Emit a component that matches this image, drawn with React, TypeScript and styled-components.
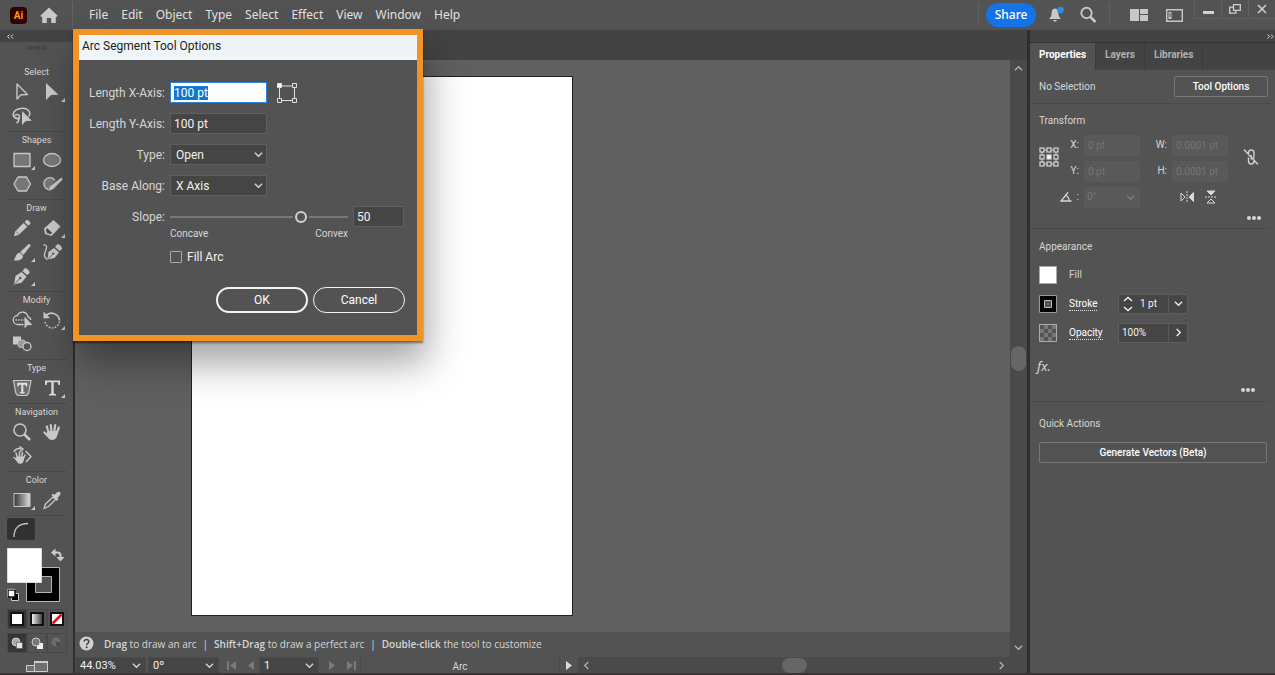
import React, { useEffect, useRef } from 'react';
import styled, { createGlobalStyle, css } from 'styled-components';

const c = {
  panel: '#535353',
  dark: '#434343',
  edge: '#2e2e2e',
  line: '#4a4a4a',
  field: '#454545',
  canvas: '#606060',
  text: '#d6d6d6',
  bright: '#f2f2f2',
  icon: '#c8c8c8',
  orange: '#ee9428',
};
const uiFont = "Roboto, 'Noto Sans', sans-serif";
const menuFont = "'Noto Sans', 'Open Sans', sans-serif";

const Global = createGlobalStyle`
  *, *::before, *::after { box-sizing: border-box; }
  body { margin: 0; background: ${c.panel}; color: ${c.text}; font: 10px/14px ${uiFont}; }
  button, input, select { font: inherit; color: inherit; margin: 0; }
  button { cursor: pointer; }
  svg { display: block; flex: none; }
`;

/* ---------- shell ---------- */
const Shell = styled.div`
  display: flex;
  flex-direction: column;
  min-height: 100vh;
  border-bottom: 3px solid #3a3436;
  position: relative;
`;
const Work = styled.div`
  flex: 1;
  display: grid;
  grid-template-columns: 75px minmax(0, 1fr) 248px;
`;

/* ---------- application bar ---------- */
const AppBar = styled.header`
  display: flex;
  align-items: center;
  height: 30px;
  background: ${c.panel};
  font: 12px/16px ${menuFont};
`;
const Brand = styled.div`
  display: flex;
  align-items: center;
  gap: 13px;
  width: 73px;
  height: 26px;
  padding-left: 10px;
  border-right: 1px solid #626262;
`;
const AiMark = styled.span`
  width: 17px;
  height: 17px;
  border-radius: 4px;
  background: #330000;
  color: #ff9a00;
  font: bold 10px/17px ${uiFont};
  text-align: center;
`;
const Menu = styled.nav`
  display: flex;
  flex: 1;
  gap: 1px;
  padding-left: 10px;
`;
const MenuItem = styled.button`
  border: 0;
  padding: 0 6px;
  background: none;
  color: #e2e2e2;
`;
const BarIcon = styled.button<{ $w: number }>`
  display: flex;
  justify-content: center;
  width: ${(p) => p.$w}px;
  padding: 0;
  border: 0;
  background: none;
  color: ${c.icon};
`;
const BarRule = styled.span<{ $space?: number }>`
  width: 1px;
  height: 24px;
  margin: 0 ${(p) => p.$space ?? 8}px;
  background: #616161;
`;
const Share = styled.button`
  width: 50px;
  height: 24px;
  margin-right: 4px;
  padding: 0;
  border: 0;
  border-radius: 12px;
  background: #1473e6;
  color: #fff;
  font-weight: 500;
`;
const WindowButtons = styled.div`
  display: flex;
  align-self: flex-start;
  margin-left: 9px;
`;
const WindowButton = styled.button`
  display: grid;
  place-items: center;
  width: 27px;
  height: 19px;
  padding: 0;
  border: solid #5f5f5f;
  border-width: 0 0 1px 1px;
  background: none;
  color: #d0d0d0;
`;

/* ---------- tool bar ---------- */
const Tools = styled.aside`
  display: flex;
  flex-direction: column;
  align-items: center;
  background: ${c.panel};
  border-right: 2px solid ${c.edge};
`;
const Strip = styled.div<{ $end?: boolean }>`
  display: flex;
  align-self: stretch;
  align-items: center;
  justify-content: ${(p) => (p.$end ? 'flex-end' : 'flex-start')};
  height: 12px;
  padding: 0 ${(p) => (p.$end ? 1 : 7)}px;
  background: ${c.dark};
`;
const Grip = styled.div`
  width: 20px;
  height: 4px;
  margin: 4px 0 13px;
  background: repeating-linear-gradient(90deg, #3f3f3f 0 1px, transparent 1px 2px);
`;
const Group = styled.section<{ $first?: boolean }>`
  width: 60px;
  padding-bottom: 2px;
  border-top: 1px solid ${(p) => (p.$first ? 'transparent' : '#494949')};
`;
const GroupName = styled.h2`
  margin: 0;
  font: 9px/16px ${uiFont};
  text-align: center;
`;
const ToolGrid = styled.div`
  display: grid;
  grid-template-columns: 30px 30px;
  grid-auto-rows: 24px;
  padding-bottom: 1px;
`;
const Tool = styled.button<{ $more?: boolean }>`
  position: relative;
  display: grid;
  place-items: center;
  padding: 0;
  border: 0;
  background: none;
  color: ${c.icon};
  ${(p) =>
    p.$more &&
    css`
      &::after {
        content: '';
        position: absolute;
        right: 2px;
        bottom: 2px;
        border: 2px solid transparent;
        border-right-color: ${c.icon};
        border-bottom-color: ${c.icon};
      }
    `}
`;
const ActiveTool = styled.button`
  display: grid;
  place-items: center;
  width: 28px;
  height: 22px;
  margin: 2px 0;
  padding: 0;
  border: 1px solid #333;
  border-radius: 2px;
  background: #313131;
  color: ${c.icon};
`;
const TriRow = styled.div`
  display: grid;
  grid-template-columns: repeat(3, 20px);
  height: 20px;
  margin-top: 4px;
`;
const Cell = styled.button<{ $on?: boolean }>`
  display: grid;
  place-items: center;
  padding: 0;
  border: 1px solid #494949;
  background: ${(p) => (p.$on ? '#363636' : 'none')};
`;
const ScreenMode = styled.button`
  margin-top: 7px;
  padding: 0;
  border: 0;
  background: none;
`;

/* ---------- document ---------- */
const Doc = styled.main`
  display: flex;
  flex-direction: column;
  min-width: 0;
`;
const TabStrip = styled.div`
  height: 30px;
  background: ${c.dark};
`;
const View = styled.div`
  flex: 1;
  display: grid;
  grid-template-columns: minmax(0, 1fr) 17px;
`;
const Stage = styled.div`
  display: flex;
  flex-direction: column;
`;
const Pasteboard = styled.div`
  flex: 1;
  padding: 16px 0 16px 116px;
  background: ${c.canvas};
`;
const Artboard = styled.div`
  width: 382px;
  height: 540px;
  border: 1px solid #222;
  background: #fff;
`;
const HelpBar = styled.div`
  display: flex;
  align-items: center;
  gap: 7px;
  height: 25px;
  padding: 0 0 2px 4px;
  background: ${c.panel};
  font-family: 'Open Sans', ${menuFont};
  white-space: pre;

  b { font-weight: 600; }
  i { font-style: normal; margin: 0 6px; }
`;
const HelpText = styled.p`
  margin: 0 0 0 3px;
`;
const StatusBar = styled.div`
  display: flex;
  height: 16px;
  background: ${c.panel};
`;
const StatusSelect = styled.label<{ $w: number }>`
  position: relative;
  display: flex;
  align-items: center;
  width: ${(p) => p.$w}px;
  margin-right: 2px;
  background: ${c.field};
  border: 1px solid #4b4b4b;
  border-bottom: 0;

  select {
    appearance: none;
    width: 100%;
    height: 15px;
    padding: 0 4px;
    border: 0;
    background: none;
    color: ${c.bright};
    font-size: 11px;
    line-height: 15px;
  }
  svg {
    position: absolute;
    right: 4px;
    pointer-events: none;
  }
`;
const StatusIcon = styled.button<{ $w: number; $dim?: boolean }>`
  display: grid;
  place-items: center;
  width: ${(p) => p.$w}px;
  padding: 0;
  border: 0;
  background: none;
  color: ${(p) => (p.$dim ? '#7a7a7a' : '#dcdcdc')};
`;
const StatusName = styled.span`
  width: 200px;
  margin-left: 1px;
  border: solid #494949;
  border-width: 0 1px;
  font-size: 10px;
  line-height: 20px;
  text-align: center;
`;
const HScroll = styled.div`
  flex: 1;
  display: flex;
  align-items: center;
  justify-content: space-between;
  padding: 0 4px;
  background: ${c.line};
  color: #b0b0b0;
`;
const VScroll = styled.div`
  display: flex;
  flex-direction: column;
  align-items: center;
  justify-content: space-between;
  padding: 4px 0 21px;
  background: ${c.line};
  color: #b0b0b0;
`;
const Thumb = styled.span<{ $v?: boolean }>`
  width: ${(p) => (p.$v ? 15 : 25)}px;
  height: ${(p) => (p.$v ? 25 : 15)}px;
  border-radius: 8px;
  background: #666;
`;

/* ---------- properties ---------- */
const Side = styled.aside`
  display: flex;
  flex-direction: column;
  border-left: 3px solid ${c.edge};
  background: ${c.panel};
`;
const Tabs = styled.div`
  display: flex;
  height: 28px;
  border-top: 1px solid #333;
  background: ${c.dark};
`;
const Tab = styled.button<{ $on?: boolean }>`
  padding: 0 9px 3px;
  border: 0;
  border-right: 1px solid #3b3b3b;
  background: ${(p) => (p.$on ? c.panel : 'none')};
  color: ${(p) => (p.$on ? '#fff' : '#b0b0b0')};
  font: bold 10px/24px ${uiFont};
`;
const Section = styled.section<{ $rule?: boolean }>`
  margin-right: 6px;
  padding: 0 2px 0 9px;
  border-bottom: 1px solid ${(p) => (p.$rule ? '#494949' : 'transparent')};
`;
const Heading = styled.h3`
  margin: 0;
  color: ${c.text};
  font: 10px/14px ${uiFont};
`;
const Between = styled.div`
  display: flex;
  align-items: center;
  justify-content: space-between;
`;
const Outline = styled.button<{ $w?: number }>`
  width: ${(p) => (p.$w ? p.$w + 'px' : '100%')};
  height: 21px;
  padding: 0;
  border: 1px solid #777;
  border-radius: 2px;
  background: none;
  color: #fff;
  font-size: 10px;
  font-weight: 500;
`;
const TransformGrid = styled.div`
  display: grid;
  grid-template-columns: 26px 75px 13px 75px 1fr;
  align-items: center;
`;
const Pair = styled.label`
  display: flex;
  align-items: center;
  justify-content: flex-end;
  gap: 5px;
  height: 26px;
`;
const DimInput = styled.input`
  width: 56px;
  height: 21px;
  padding: 0 4px;
  border: 0;
  background: #595959;
  color: #757575;
`;
const DimSelect = styled.span`
  position: relative;
  display: flex;
  align-items: center;
  color: #7c7c7c;

  select {
    appearance: none;
    width: 56px;
    height: 21px;
    padding: 0 3px;
    border: 0;
    background: #595959;
    color: #757575;
    opacity: 1;
  }
  svg {
    position: absolute;
    right: 5px;
    pointer-events: none;
  }
`;
const FlipGroup = styled.div`
  display: flex;
  align-items: center;
  justify-content: flex-end;
  gap: 10px;
  padding-right: 10px;
`;
const More = styled.button<{ $inset: number }>`
  display: block;
  margin: 0 ${(p) => p.$inset}px 0 auto;
  padding: 0;
  border: 0;
  background: none;
  color: ${c.text};
`;
const LookRow = styled.div`
  display: grid;
  grid-template-columns: 30px 49px auto;
  align-items: center;
  justify-content: start;
  height: 29px;
`;
const LookLink = styled.a`
  justify-self: start;
  border-bottom: 1px dotted #ddd;
  color: #fff;
  line-height: 13px;
  text-decoration: none;
`;
const Combo = styled.div`
  display: flex;
  height: 20px;
  border: 1px solid #5e5e5e;
  background: ${c.field};

  button {
    display: grid;
    place-items: center;
    width: 18px;
    padding: 0;
    border: 0;
    background: none;
    color: #eee;
  }
  input {
    height: 18px;
    padding: 0 3px;
    border: 0;
    border-right: 1px solid #5a5a5a;
    background: none;
    color: ${c.bright};
  }
`;
const ComboInput = styled.input<{ $w: number }>`
  width: ${(p) => p.$w}px;
`;
const Fx = styled.button`
  display: block;
  margin: 10px 0 0 -2px;
  padding: 0;
  border: 0;
  background: none;
  font: italic 13px/18px ${menuFont};
`;

/* ---------- dialog ---------- */
const Dialog = styled.form`
  position: absolute;
  top: 29px;
  left: 73px;
  width: 350px;
  border: 6px solid ${c.orange};
  background: ${c.panel};
  box-shadow: 0 2px 2px rgba(0, 0, 0, 0.45), 4px 22px 36px rgba(0, 0, 0, 0.36);
  font: 12px/16px ${uiFont};
`;
const DialogTitle = styled.h1`
  margin: 0;
  padding: 2px 3px 0;
  height: 25px;
  background: #eff4f9;
  color: #1c1c1c;
  font: 12px/18px ${uiFont};
`;
const Fields = styled.div`
  display: flex;
  flex-direction: column;
  gap: 10px;
  padding-top: 22px;
`;
const FieldRow = styled.div`
  display: grid;
  grid-template-columns: 86px auto auto;
  column-gap: 5px;
  align-items: center;
  justify-content: start;
  height: 21px;

  label { text-align: right; }
`;
const box = css`
  height: 21px;
  border: 1px solid #5f5f5f;
  background: ${c.field};
  color: ${c.bright};
`;
const TextField = styled.input<{ $w: number }>`
  ${box}
  width: ${(p) => p.$w}px;
  padding: 0 3px;

  &:focus {
    outline: 0;
    border-color: #2f80d8;
    background: #fff;
    color: #222;
  }
  &::selection {
    background: #0f78d4;
    color: #fff;
  }
`;
const DropField = styled.span`
  position: relative;
  display: flex;
  align-items: center;

  select {
    ${box}
    appearance: none;
    width: 97px;
    padding: 0 5px;
  }
  svg {
    position: absolute;
    right: 4px;
    pointer-events: none;
  }
`;
const Corner = styled.span`
  margin-left: 5px;
`;
const Slider = styled.input`
  appearance: none;
  width: 178px;
  height: 16px;
  background: none;

  &::-webkit-slider-runnable-track {
    height: 2px;
    background: #777;
  }
  &::-webkit-slider-thumb {
    appearance: none;
    width: 12px;
    height: 12px;
    margin-top: -5px;
    border: 2px solid #d2d2d2;
    border-radius: 50%;
    background: ${c.panel};
    box-shadow: 0 0 0 2px ${c.panel};
  }
`;
const Hints = styled.div`
  display: flex;
  justify-content: space-between;
  width: 178px;
  margin-left: 91px;
  font-size: 10px;
  line-height: 14px;
`;
const Check = styled.label`
  display: flex;
  align-items: center;
  gap: 5px;
  margin: 8px 0 0 91px;
  color: ${c.bright};

  input {
    appearance: none;
    width: 12px;
    height: 12px;
    border: 1px solid #a8a8a8;
    border-radius: 1px;
  }
`;
const Actions = styled.div`
  display: flex;
  justify-content: flex-end;
  gap: 5px;
  padding: 22px 12px;
`;
const Pill = styled.button<{ $primary?: boolean }>`
  width: 92px;
  height: 26px;
  border: ${(p) => (p.$primary ? 2 : 1)}px solid #f4f4f4;
  border-radius: 13px;
  background: none;
  color: #fff;
`;

/* ---------- icons ---------- */
type Kids = { children: React.ReactNode };
const Ico = ({ children }: Kids) => (
  <svg width="22" height="22" viewBox="0 0 22 22" fill="none" stroke="currentColor" strokeWidth="1.3" strokeLinejoin="round">
    {children}
  </svg>
);
const Chevron = ({ dir = 'down', size = 9 }: { dir?: 'down' | 'up' | 'left' | 'right'; size?: number }) => {
  const d = { down: 'M1 3l4 4 4-4', up: 'M1 7l4-4 4 4', left: 'M7 1L3 5l4 4', right: 'M3 1l4 4-4 4' }[dir];
  return (
    <svg width={size} height={size} viewBox="0 0 10 10" fill="none" stroke="currentColor" strokeWidth="1.5">
      <path d={d} />
    </svg>
  );
};
const Double = ({ right }: { right?: boolean }) => (
  <svg width="7" height="5" viewBox="0 0 7 5" fill="none" stroke="#ddd" strokeWidth="1">
    <path d={right ? 'M.5 .5l2 2-2 2M4 .5l2 2-2 2' : 'M2.500 .5l-2 2 2 2M6 .5l-2 2 2 2'} />
  </svg>
);
const Dots = () => (
  <svg width="16" height="6" viewBox="0 0 16 6" fill="currentColor">
    <circle cx="3" cy="3" r="2" /><circle cx="8" cy="3" r="2" /><circle cx="13" cy="3" r="2" />
  </svg>
);

const icons: Record<string, React.ReactNode> = {
  Selection: <Ico><path d="M6 3v15l4-4.200 6.500-.3z" strokeWidth="1.400" /></Ico>,
  'Direct Selection': <Ico><path d="M5 2v17l5-5 7.500-.3z" fill="currentColor" stroke="none" /></Ico>,
  Lasso: (
    <Ico>
      <path d="M9 13.500c-6 1-8-3-6-6.500 2.500-4 11-5 14.500-1.500 1.800 2 1.300 4.500 0 6" strokeWidth="1.500" />
      <path d="M4 11c1-2.500 5-1.500 4.500 1-.5 2-4 1.800-4 0M7.500 13.500c.5 2 0 3.500-2 4.500" strokeWidth="1.500" />
      <path d="M11 6v14l3.800-4 6-.3z" fill="currentColor" stroke="none" />
    </Ico>
  ),
  Rectangle: <Ico><path d="M3 4.500h16v13H3z" fill="#777" /></Ico>,
  Ellipse: <Ico><ellipse cx="11" cy="11" rx="8.500" ry="6.500" fill="#777" /></Ico>,
  Polygon: <Ico><path d="M7 4h8.500l4 7-4 7H7l-4-7z" fill="#777" /></Ico>,
  Shaper: (
    <Ico>
      <path d="M14 7.500A6 6 0 1 0 8 16.500z" fill="#777" stroke="none" />
      <path d="M14 7.500A6 6 0 1 0 7.500 16.500" />
      <path d="M20.500 4.500l1.200 2-9.500 9.500-4.700 2 1.500-4.500z" fill="currentColor" stroke="none" />
    </Ico>
  ),
  Pencil: (
    <Ico>
      <path d="M12.500 6l3.800 3.800L7.500 18 3 19.300 4.200 14.500zM13.500 5l2.300-2.300c1.500.3 3.200 2 3.800 3.800L17.300 8.800z" fill="currentColor" stroke="none" />
      <path d="M5.300 15l2.200 2" stroke="#535353" strokeWidth=".8" />
    </Ico>
  ),
  Eraser: (
    <Ico>
      <path d="M3 11.500L12.500 3l7 6.500-9 9.500-6.500-2z" fill="currentColor" stroke="none" />
      <path d="M5 12.500l.8 3.500 4 1.200 1.200-1.400-4.700-4.500z" fill="#484848" stroke="none" />
    </Ico>
  ),
  Paintbrush: (
    <Ico>
      <path d="M18 3l1.500 1.500-7.200 9.200-2.800-2.600zM8.800 12l2.800 2.700c.2 4-4.600 5-8.600 4.300 2.200-1.500 1.300-6.500 5.800-7z" fill="currentColor" strokeWidth=".6" />
    </Ico>
  ),
  Curvature: (
    <Ico>
      <path d="M2.500 4c3.500-.5 3.500 2.500 2.200 5.500S2 16 6.500 18.500" />
      <path d="M6.500 18.500l1-7.500 5.500-4 5 4.500-4.500 5.500zM14 6l2.500-3c2.500.5 4.500 2.500 4.700 5L18.500 10z" fill="currentColor" stroke="none" />
      <path d="M7.500 17.500l4-4" stroke="#535353" strokeWidth=".9" /><circle cx="12.200" cy="12.700" r="1.100" fill="#535353" stroke="none" />
    </Ico>
  ),
  Pen: (
    <Ico>
      <path d="M3 19.500l1.500-8.500 6-4 5 4.500-4.700 6zM11.500 6L14 3c2.500.5 4.500 2.500 4.700 5L16 10z" fill="currentColor" stroke="none" />
      <path d="M4 18.500l4.500-4.500" stroke="#535353" strokeWidth=".9" /><circle cx="9.200" cy="13" r="1.200" fill="#535353" stroke="none" />
    </Ico>
  ),
  'Shape Builder': (
    <Ico>
      <path d="M12.500 15.500H7a4.500 4.500 0 0 1-.5-9 5.500 5.500 0 0 1 10.500 1.500c1.500.3 2.500 1.500 3 3" />
      <path d="M4.500 11h9" strokeDasharray="1.500 1.200" />
      <path d="M13.500 7.500v12l3-3.200 5-.3z" fill="currentColor" stroke="none" />
    </Ico>
  ),
  Rotate: (
    <Ico>
      <path d="M5 6.500a8 8 0 0 1 13.500 5" strokeWidth="1.800" />
      <path d="M2.500 2.500v7l6.500-.5z" fill="currentColor" stroke="none" />
      <path d="M18.500 12.500a7.300 7.300 0 0 1-14.500 0" strokeWidth="1.600" strokeDasharray="1.600 1.500" />
    </Ico>
  ),
  Blend: (
    <Ico>
      <path d="M2 3.500h8v8H2z" fill="currentColor" stroke="none" />
      <rect x="7" y="7" width="7.500" height="7.500" rx="2.500" fill="#9a9a9a" stroke="#c4c4c4" strokeWidth=".8" />
      <circle cx="16" cy="13.500" r="4" fill="#535353" />
    </Ico>
  ),
  'Touch Type': (
    <Ico>
      <path d="M2.500 3.500h17.500l-2.300 12.500-2.200 2.500H7L4.800 16z" fill="#6c6c6c" strokeWidth="1.200" />
      <path d="M6.300 5.800h10v3.700H15l-.5-1.800h-2.200v7.300l1.500.5v1H8.800v-1l1.500-.5V7.700H8.100l-.5 1.800H6.300z" fill="#e2e2e2" stroke="none" />
    </Ico>
  ),
  Type: <Ico><path d="M4 3.500h15V8h-1.500l-.8-2.700H12.700v11.200l2.300.7v1.300H8v-1.300l2.300-.7V5.300H6.300L5.500 8H4z" fill="#d8d8d8" stroke="none" /></Ico>,
  Zoom: <Ico><circle cx="9" cy="9" r="6" strokeWidth="1.500" /><path d="M13.500 13.500l5.500 5.500" strokeWidth="2.500" /></Ico>,
  Hand: (
    <Ico>
      <path d="M7.800 12L5.800 5.500M10.500 11L9.800 4M13.200 11l1-7M15.800 12l2-5.500M6.500 14.500l-3-3" strokeWidth="2.200" strokeLinecap="round" />
      <path d="M6.800 10h10c.2 5.500-2 9-5.300 9S7 17 5 14z" fill="currentColor" stroke="none" />
    </Ico>
  ),
  'Rotate View': (
    <Ico>
      <path d="M6.300 12L5 8M8.500 12V7M10.700 12l.8-4.500M12.500 13l1.700-3M5.500 14.500l-2.500-2" strokeWidth="1.500" strokeLinecap="round" />
      <path d="M5.700 11.500h7.600c.2 4.500-1.500 7.300-4 7.300S6 17 4.500 14.500z" fill="currentColor" stroke="none" />
      <path d="M3 7C4 4 7 3 10 4M8.500 1.500l3.500 2.700-3 2.600M14.500 6l5.500 5.500-5 5.500" strokeWidth="1.500" />
    </Ico>
  ),
  Gradient: (
    <Ico>
      <defs><linearGradient id="toolGrad"><stop stopColor="#333" /><stop offset="1" stopColor="#ddd" /></linearGradient></defs>
      <path d="M3 4.500h16v13H3z" fill="url(#toolGrad)" strokeWidth="1" />
    </Ico>
  ),
  Eyedropper: (
    <Ico>
      <path d="M12 8l2.500 2.500-7 7L3 19.500l1.500-4.500z" />
      <path d="M10.500 6l1.500-1.300 1.500 1L16.500 3c2-1.200 4 1 2.500 3L16.500 9l.8 1.500-1.500 1.500z" fill="currentColor" stroke="none" />
    </Ico>
  ),
};

type ToolDef = [name: string, more?: boolean];
const groups: { name: string; tools: ToolDef[] }[] = [
  { name: 'Select', tools: [['Selection'], ['Direct Selection', true], ['Lasso']] },
  { name: 'Shapes', tools: [['Rectangle', true], ['Ellipse'], ['Polygon'], ['Shaper']] },
  { name: 'Draw', tools: [['Pencil'], ['Eraser', true], ['Paintbrush', true], ['Curvature'], ['Pen', true]] },
  { name: 'Modify', tools: [['Shape Builder'], ['Rotate', true], ['Blend']] },
  { name: 'Type', tools: [['Touch Type'], ['Type', true]] },
  { name: 'Navigation', tools: [['Zoom'], ['Hand'], ['Rotate View']] },
  { name: 'Color', tools: [['Gradient', true], ['Eyedropper']] },
];

const FillStroke = () => (
  <svg width="60" height="61" viewBox="0 0 60 61" fill="none" role="img" aria-label="Fill and stroke">
    <path d="M19.500 23.500h33v34h-33z" fill="#000" stroke="#b5b5b5" />
    <path d="M28.500 32.500h16v16h-16z" fill="#535353" stroke="#b5b5b5" />
    <path d="M.5 4.500h34v34H.5z" fill="#fff" stroke="#ddd" />
    <path d="M47 8.500h3.500c2 0 3 1 3 3v3" stroke="#ccc" strokeWidth="2" />
    <path d="M44 8.500l4.500-4v8zM49.500 13h8l-4 4.500z" fill="#ccc" />
    <path d="M4.500 49.500h7v7h-7z" fill="#000" stroke="#ccc" />
    <path d="M1 46h7v7H1z" fill="#fff" stroke="#111" strokeWidth="1.500" />
    <path d="M.3 53.500v-8.200h8.200" stroke="#ccc" strokeWidth=".8" />
  </svg>
);

const PaintCell = ({ kind }: { kind: 'solid' | 'gradient' | 'none' }) => (
  <svg width="14" height="14" viewBox="0 0 14 14">
    <defs><linearGradient id="paintGrad"><stop stopColor="#fff" /><stop offset="1" stopColor="#333" /></linearGradient></defs>
    <path d="M1 1h12v12H1z" fill={kind === 'gradient' ? 'url(#paintGrad)' : '#fff'} stroke="#111" strokeWidth="2" />
    {kind === 'none' && <path d="M2.500 11.500l9-9" stroke="#e3101c" strokeWidth="2.500" />}
  </svg>
);
const DrawMode = ({ kind }: { kind: 0 | 1 | 2 }) => (
  <svg width="14" height="14" viewBox="0 0 14 14" opacity={kind === 2 ? 0.25 : 1}>
    {kind === 1 && <path d="M7 7h6v6H7z" fill="#eee" />}
    <circle cx="6" cy="6" r="4" fill={kind === 1 ? '#777' : '#aaa'} stroke="#ccc" />
    {kind === 0 && <path d="M6.500 6.500h6v6h-6z" fill="#e4e4e4" stroke="#555" strokeWidth=".6" />}
    {kind === 2 && <path d="M6 6h4v4H6z" fill="#333" />}
  </svg>
);

const ToolPanel = () => (
  <Tools aria-label="Tools">
    <Strip><Double /></Strip>
    <Grip />
    {groups.map((g, i) => (
      <Group key={g.name} $first={i === 0}>
        <GroupName>{g.name}</GroupName>
        <ToolGrid>
          {g.tools.map(([name, more]) => (
            <Tool key={name} $more={more} aria-label={name}>{icons[name]}</Tool>
          ))}
        </ToolGrid>
      </Group>
    ))}
    <Group>
      <ActiveTool aria-label="Arc Segment">
        <Ico><path d="M4 18C4 9 9 4.500 18 4.500" /></Ico>
      </ActiveTool>
    </Group>
    <FillStroke />
    <TriRow>
      <Cell $on aria-label="Color"><PaintCell kind="solid" /></Cell>
      <Cell aria-label="Gradient fill"><PaintCell kind="gradient" /></Cell>
      <Cell aria-label="None"><PaintCell kind="none" /></Cell>
    </TriRow>
    <TriRow>
      <Cell $on aria-label="Draw Normal"><DrawMode kind={0} /></Cell>
      <Cell aria-label="Draw Behind"><DrawMode kind={1} /></Cell>
      <Cell aria-label="Draw Inside"><DrawMode kind={2} /></Cell>
    </TriRow>
    <ScreenMode aria-label="Screen mode">
      <svg width="22" height="12" viewBox="0 0 22 12" fill="#707070" stroke="#ccc">
        <path d="M.5 5.500h10v6H.5z" /><path d="M8.500 1.500h13v10h-13z" /><path d="M8 2h14" strokeWidth="2" />
      </svg>
    </ScreenMode>
  </Tools>
);

const TopBar = () => (
  <AppBar>
    <Brand>
      <AiMark>Ai</AiMark>
      <svg width="18" height="17" viewBox="0 0 18 17" fill="#c8c8c8">
        <path d="M9 .5l8.700 8.200-1.200 1.300-.7-.5V16h-4.600v-5H6.800v5H2.200V9.500l-.7.500L.3 8.700z" />
      </svg>
    </Brand>
    <Menu>
      {['File', 'Edit', 'Object', 'Type', 'Select', 'Effect', 'View', 'Window', 'Help'].map((m) => (
        <MenuItem key={m}>{m}</MenuItem>
      ))}
    </Menu>
    <BarRule $space={7} />
    <Share>Share</Share>
    <BarIcon $w={32} aria-label="Notifications">
      <svg width="18" height="18" viewBox="0 0 18 18">
        <path d="M8 2.500c3 .5 3.500 3 3.500 5.500 0 2 .8 3 2.500 5H2c1.700-2 2.500-3 2.500-5C4.500 5.500 5 3 8 2.500zM6.200 14h3.600c-.2 2.300-3.400 2.300-3.600 0z" fill="#c8c8c8" />
        <circle cx="13.500" cy="4" r="3.300" fill="#2e8cf0" />
      </svg>
    </BarIcon>
    <BarIcon $w={32} aria-label="Search">
      <svg width="18" height="18" viewBox="0 0 18 18" fill="none" stroke="currentColor">
        <circle cx="7.500" cy="7" r="5.200" strokeWidth="1.900" /><path d="M11.300 10.800L16.500 16" strokeWidth="2.600" />
      </svg>
    </BarIcon>
    <BarRule $space={5} />
    <BarIcon $w={48} aria-label="Arrange documents">
      <svg width="18" height="12" viewBox="0 0 18 12" fill="currentColor"><path d="M0 0h9v12H0zM10 0h8v5h-8zM10 6h8v6h-8z" /></svg>
    </BarIcon>
    <BarIcon $w={22} aria-label="Switch workspace">
      <svg width="17" height="13" viewBox="0 0 17 13" fill="none" stroke="currentColor"><path d="M.7 .7h15.600v11.600H.7z" strokeWidth="1.400" /><path d="M2.500 3h3v7h-3z" fill="currentColor" stroke="none" /><path d="M3 5h2M3 7h2" stroke="#535353" /></svg>
    </BarIcon>
    <WindowButtons>
      <WindowButton aria-label="Minimize"><svg width="11" height="14" viewBox="0 0 11 14"><path d="M0 9h11v3H0z" fill="currentColor" /></svg></WindowButton>
      <WindowButton aria-label="Restore"><svg width="12" height="10" viewBox="0 0 12 10" fill="none" stroke="currentColor" strokeWidth="1.300"><path d="M4.500 .7h6.800v5.600H4.500zM4.500 3.200H.7v6h6.300V6.500" /></svg></WindowButton>
      <WindowButton aria-label="Close"><svg width="10" height="10" viewBox="0 0 10 10" stroke="currentColor" strokeWidth="1.600"><path d="M1 1l8 8M9 1L1 9" /></svg></WindowButton>
    </WindowButtons>
  </AppBar>
);

const Document = () => (
  <Doc>
    <TabStrip />
    <View>
      <Stage>
        <Pasteboard><Artboard /></Pasteboard>
        <HelpBar>
          <svg width="15" height="15" viewBox="0 0 15 15">
            <circle cx="7.500" cy="7.500" r="7" fill="#d0d0d0" />
            <path d="M5.200 5.800c0-3.200 4.800-3 4.600 0-.1 1.500-2.200 1.600-2.200 3.400" fill="none" stroke="#444" strokeWidth="1.500" />
            <circle cx="7.600" cy="11.200" r="1" fill="#444" />
          </svg>
          <HelpText><b>Drag</b> to draw an arc<i>|</i><b>Shift+Drag</b> to draw a perfect arc<i>|</i><b>Double-click</b> the tool to customize</HelpText>
        </HelpBar>
        <StatusBar>
          <StatusSelect $w={71}><select aria-label="Zoom level" defaultValue="44.03%"><option>44.03%</option></select><Chevron /></StatusSelect>
          <StatusSelect $w={71}><select aria-label="Rotate view" defaultValue="0º"><option>0º</option></select><Chevron /></StatusSelect>
          <StatusIcon $w={22} $dim aria-label="First"><svg width="10" height="9" viewBox="0 0 10 9" fill="currentColor"><path d="M0 0h2v9H0zM9 0v9L3 4.500z" /></svg></StatusIcon>
          <StatusIcon $w={16} $dim aria-label="Previous"><svg width="6" height="9" viewBox="0 0 6 9" fill="currentColor"><path d="M6 0v9L0 4.500z" /></svg></StatusIcon>
          <StatusSelect $w={60}><select aria-label="Artboard" defaultValue="1"><option>1</option></select><Chevron /></StatusSelect>
          <StatusIcon $w={22} $dim aria-label="Next"><svg width="6" height="9" viewBox="0 0 6 9" fill="currentColor"><path d="M0 0v9l6-4.500z" /></svg></StatusIcon>
          <StatusIcon $w={16} $dim aria-label="Last"><svg width="10" height="9" viewBox="0 0 10 9" fill="currentColor"><path d="M8 0h2v9H8zM1 0v9l6-4.500z" /></svg></StatusIcon>
          <StatusName>Arc</StatusName>
          <StatusIcon $w={18} aria-label="Status options"><svg width="6" height="9" viewBox="0 0 6 9" fill="currentColor"><path d="M0 0v9l6-4.500z" /></svg></StatusIcon>
          <HScroll><Chevron dir="left" /><Thumb /><Chevron dir="right" /></HScroll>
        </StatusBar>
      </Stage>
      <VScroll><Chevron dir="up" /><Thumb $v /><Chevron /></VScroll>
    </View>
  </Doc>
);

const RefPoint = () => (
  <svg width="20" height="20" viewBox="0 0 20 20" fill="none" stroke="#d8d8d8" strokeWidth="1.200">
    {[0, 1, 2].map((r) => [0, 1, 2].map((k) => (
      <rect key={`${r}${k}`} x={k * 7 + 1} y={r * 7 + 1} width="4" height="4" fill={r === 1 && k === 1 ? '#fff' : 'none'} />
    )))}
    <path d="M5 3h3M12 3h3M5 17h3M12 17h3M3 5v3M3 12v3M17 5v3M17 12v3" strokeWidth="1" />
  </svg>
);

const SelectionSection = styled(Section)`padding-top: 6px; padding-bottom: 6px; margin-right: 5px;`;
const TransformSection = styled(Section)`padding-top: 10px; padding-bottom: 7px;`;
const TransformBody = styled.div`padding: 4px 0 5px;`;
const RefCell = styled.div`grid-row: span 3; align-self: start; padding-top: 15px;`;
const LinkCell = styled.div`grid-row: span 3; align-self: start; padding: 16px 0 0 15px;`;
const LookSection = styled(Section)`padding-top: 11px; padding-bottom: 8px;`;
const LookRows = styled.div`padding-top: 6px;`;
const LookMore = styled.div`padding-top: 12px;`;
const QuickSection = styled(Section)`padding-top: 15px;`;
const QuickBody = styled.div`padding-top: 11px;`;

const Properties = () => (
  <Side>
    <Strip $end><Double right /></Strip>
    <Tabs>
      <Tab $on>Properties</Tab>
      <Tab>Layers</Tab>
      <Tab>Libraries</Tab>
    </Tabs>
    <SelectionSection $rule>
      <Between><span>No Selection</span><Outline $w={94}>Tool Options</Outline></Between>
    </SelectionSection>
    <TransformSection $rule>
      <Heading>Transform</Heading>
      <TransformBody>
        <TransformGrid>
          <RefCell><RefPoint /></RefCell>
          <Pair>X:<DimInput defaultValue="0 pt" /></Pair>
          <span />
          <Pair>W:<DimInput defaultValue="0.0001 pt" /></Pair>
          <LinkCell>
            <svg width="16" height="18" viewBox="0 0 16 18" fill="none" stroke="#d0d0d0" strokeWidth="1.400">
              <path d="M5.500 7.500V5c0-4 5.500-4 5.500 0v3.500c0 1-.5 1.800-1.200 2.200M11 11.500V13c0 4-5.500 4-5.500 0V9.500M8.200 7v4.500M1 1.500l14 15" />
            </svg>
          </LinkCell>
          <Pair>Y:<DimInput defaultValue="0 pt" /></Pair>
          <span />
          <Pair>H:<DimInput defaultValue="0.0001 pt" /></Pair>
          <Pair>
            <svg width="12" height="10" viewBox="0 0 12 10" fill="none" stroke="#d8d8d8" strokeWidth="1.300"><path d="M8 .5L1 9h10.500M6 3.500c2 1 3 3 3 5.500" /></svg>:
            <DimSelect><select aria-label="Rotation" disabled defaultValue="0°"><option>0°</option></select><Chevron /></DimSelect>
          </Pair>
          <span />
          <FlipGroup>
            <svg width="14" height="12" viewBox="0 0 14 12" fill="none" stroke="#d8d8d8"><path d="M1 2v8l4-4z" /><path d="M13.500 1.500v9L9 6z" fill="#d8d8d8" /><path d="M7 0v12" strokeDasharray="2 1" /></svg>
            <svg width="14" height="14" viewBox="0 0 14 14" fill="none" stroke="#d8d8d8"><path d="M3 1h8L7 5z" fill="#d8d8d8" /><path d="M3 13h8L7 9z" /><path d="M1 7h12" strokeDasharray="2 1" /></svg>
          </FlipGroup>
        </TransformGrid>
      </TransformBody>
      <More $inset={5} aria-label="More transform options"><Dots /></More>
    </TransformSection>
    <LookSection $rule>
      <Heading>Appearance</Heading>
      <LookRows>
        <LookRow>
          <svg width="18" height="18" viewBox="0 0 18 18"><path d="M.5 .5h17v17H.5z" fill="#fff" stroke="#aaa" /></svg>
          <span>Fill</span>
        </LookRow>
        <LookRow>
          <svg width="18" height="18" viewBox="0 0 18 18"><path d="M.5 .5h17v17H.5z" fill="#000" stroke="#999" /><path d="M5.500 5.500h7v7h-7z" fill="#535353" stroke="#bbb" /></svg>
          <LookLink href="#stroke">Stroke</LookLink>
          <Combo>
            <button aria-label="Step stroke weight">
              <svg width="10" height="16" viewBox="0 0 10 16" fill="none" stroke="currentColor" strokeWidth="1.500"><path d="M1 5l4-3.500L9 5M1 11l4 3.500L9 11" /></svg>
            </button>
            <ComboInput $w={32} aria-label="Stroke weight" defaultValue="1 pt" />
            <button aria-label="Stroke weight presets"><Chevron /></button>
          </Combo>
        </LookRow>
        <LookRow>
          <svg width="18" height="18" viewBox="0 0 18 18">
            <path d="M.5 .5h17v17H.5z" fill="#777" stroke="#aaa" />
            <path d="M1 1h4v4H1zM9 1h4v4H9zM5 5h4v4H5zM13 5h4v4h-4zM1 9h4v4H1zM9 9h4v4H9zM5 13h4v4H5zM13 13h4v4h-4z" fill="#555" />
          </svg>
          <LookLink href="#opacity">Opacity</LookLink>
          <Combo>
            <ComboInput $w={50} aria-label="Opacity" defaultValue="100%" />
            <button aria-label="Opacity slider"><Chevron dir="right" /></button>
          </Combo>
        </LookRow>
      </LookRows>
      <Fx aria-label="Effects">fx.</Fx>
      <LookMore><More $inset={11} aria-label="More appearance options"><Dots /></More></LookMore>
    </LookSection>
    <QuickSection>
      <Heading>Quick Actions</Heading>
      <QuickBody><Outline>Generate Vectors (Beta)</Outline></QuickBody>
    </QuickSection>
  </Side>
);

const ArcDialog = () => {
  const first = useRef<HTMLInputElement>(null);
  useEffect(() => {
    first.current?.focus();
    first.current?.select();
  }, []);
  return (
    <Dialog role="dialog" aria-labelledby="arc-title" onSubmit={(e) => e.preventDefault()}>
      <DialogTitle id="arc-title">Arc Segment Tool Options</DialogTitle>
      <Fields>
        <FieldRow>
          <label htmlFor="lx">Length X-Axis:</label>
          <TextField id="lx" ref={first} $w={97} defaultValue="100 pt" />
          <Corner>
            <svg width="20" height="20" viewBox="0 0 20 20" fill="none" stroke="#e0e0e0">
              <path d="M5 3h10M5 17.500h10M2.500 5v10M17.500 5v10" />
              <path d="M.5 .5h4v4h-4z" fill="#fff" /><path d="M15.500 .5h4v4h-4zM.5 15.500h4v4h-4zM15.500 15.500h4v4h-4z" />
            </svg>
          </Corner>
        </FieldRow>
        <FieldRow>
          <label htmlFor="ly">Length Y-Axis:</label>
          <TextField id="ly" $w={97} defaultValue="100 pt" />
        </FieldRow>
        <FieldRow>
          <label htmlFor="type">Type:</label>
          <DropField><select id="type" defaultValue="Open"><option>Open</option><option>Closed</option></select><Chevron /></DropField>
        </FieldRow>
        <FieldRow>
          <label htmlFor="base">Base Along:</label>
          <DropField><select id="base" defaultValue="X Axis"><option>X Axis</option><option>Y Axis</option></select><Chevron /></DropField>
        </FieldRow>
        <FieldRow>
          <label htmlFor="slope">Slope:</label>
          <Slider id="slope" type="range" min={-100} max={100} defaultValue={50} />
          <TextField $w={51} aria-label="Slope value" defaultValue="50" />
        </FieldRow>
      </Fields>
      <Hints><span>Concave</span><span>Convex</span></Hints>
      <Check><input type="checkbox" />Fill Arc</Check>
      <Actions>
        <Pill $primary type="submit">OK</Pill>
        <Pill type="button">Cancel</Pill>
      </Actions>
    </Dialog>
  );
};

export default function App() {
  return (
    <>
      <Global />
      <Shell>
        <TopBar />
        <Work>
          <ToolPanel />
          <Document />
          <Properties />
        </Work>
        <ArcDialog />
      </Shell>
    </>
  );
}
